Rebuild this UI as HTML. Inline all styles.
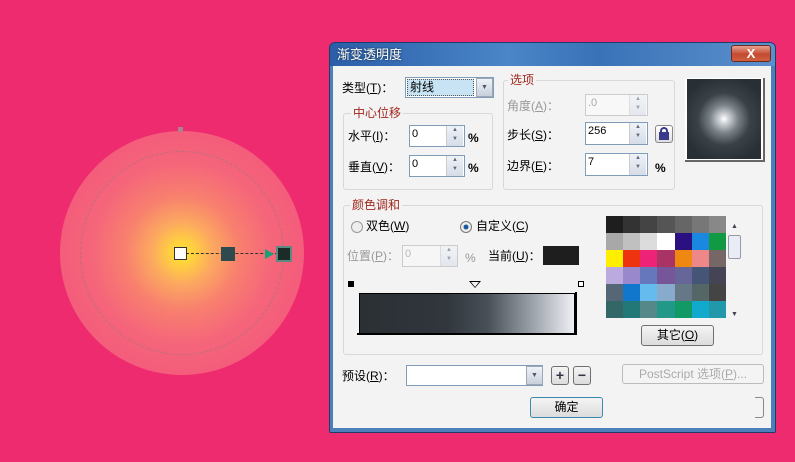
<!DOCTYPE html>
<html><head><meta charset="utf-8"><style>
*{margin:0;padding:0;box-sizing:border-box}
body{width:795px;height:462px;overflow:hidden;background:#ef2b6f;position:relative;font-family:"Liberation Sans","Noto Sans CJK SC",sans-serif;font-size:12px;color:#000}
.a{position:absolute}
.t{position:absolute;white-space:nowrap;font-size:12px;line-height:14px}
.g{color:#999}
.r{color:#a0281e}
.in{position:absolute;background:#fff;border:1px solid #7f9db9;font-size:11px;padding-left:2px;line-height:16px}
.sp{position:absolute;width:17px;border-left:1px solid #ccc;background:linear-gradient(#eef2f8,#d6dde8)}
.sp:after{content:"▲\A▼";white-space:pre;font-size:6px;line-height:9px;color:#667;display:block;text-align:center}
.dd{position:absolute;width:17px;border:1px solid #a0a8b8;background:linear-gradient(#eef2f8,#c8d0dc);font-size:7px;color:#556;text-align:center}
.fs{position:absolute;border:1px solid #d8d8d8;border-radius:3px}
.btn{position:absolute;border:1px solid #707070;border-radius:3px;background:linear-gradient(#f4f4f4,#dcdcdc);text-align:center;font-size:12px;line-height:16px}
</style></head><body>
<!-- circle -->
<div class="a" style="left:60px;top:131px;width:244px;height:244px;border-radius:50%;background:radial-gradient(circle at 50% 50%,#ffe428 0,#ffd040 7%,#fca860 18%,#f8806e 33%,#f5667a 52%,#f35a7b 75%,#f25479 100%)"></div>
<div class="a" style="left:80px;top:151px;width:204px;height:204px;border-radius:50%;border:1px dashed #b8707e"></div>
<div class="a" style="left:178px;top:127px;width:5px;height:5px;background:#b08090"></div>
<div class="a" style="left:186px;top:253px;width:92px;border-top:1px dashed #333"></div>
<div class="a" style="left:174px;top:247px;width:13px;height:13px;background:#fff;border:1px solid #333"></div>
<div class="a" style="left:221px;top:247px;width:14px;height:14px;background:#2f4a4e"></div>
<div class="a" style="left:265px;top:249px;width:0;height:0;border-left:9px solid #1aa078;border-top:5px solid transparent;border-bottom:5px solid transparent"></div>
<div class="a" style="left:276px;top:246px;width:16px;height:16px;background:#1c2a28;border:2px solid #5a8a80"></div>

<!-- dialog -->
<div class="a" style="left:329px;top:42px;width:447px;height:391px;background:#4d7fb8;border:1px solid #1c3d6a;border-radius:6px 6px 2px 2px"></div>
<div class="a" style="left:330px;top:43px;width:445px;height:23px;background:linear-gradient(90deg,#2b5ea8,#4a86c8 40%,#3a72b8 60%,#5a90cc);border-radius:5px 5px 0 0"></div>
<div class="t" style="left:337px;top:48px;color:#fff;font-size:13px;text-shadow:0 0 2px #123">渐变透明度</div>
<div class="a" style="left:731px;top:45px;width:40px;height:17px;background:linear-gradient(#e8a090,#c44a30 55%,#d06040);border:1px solid #6a2a20;border-radius:3px;color:#fff;text-align:center;font-weight:bold;font-size:13px;line-height:15px">X</div>
<div class="a" style="left:333px;top:66px;width:438px;height:362px;background:#f3f3f3"></div>

<div class="t" style="left:342px;top:81px">类型(<u>T</u>)：</div>
<div class="a" style="left:405px;top:77px;width:89px;height:21px;border:1px solid #7f9db9;background:#fff"></div>
<div class="a" style="left:407px;top:79px;width:67px;height:17px;background:#c8e4f4;border:1px dotted #555;font-size:12px;line-height:15px;padding-left:2px">射线</div>
<div class="dd" style="left:476px;top:78px;height:19px;line-height:17px">▼</div>

<div class="fs" style="left:343px;top:113px;width:150px;height:77px"></div>
<div class="t r" style="left:351px;top:106px;background:#f3f3f3;padding:0 2px">中心位移</div>
<div class="t" style="left:348px;top:129px">水平(<u>I</u>)：</div>
<div class="in" style="left:409px;top:125px;width:56px;height:22px">0</div>
<div class="sp" style="left:446px;top:126px;height:20px"></div>
<div class="t" style="left:468px;top:131px;font-weight:bold">%</div>
<div class="t" style="left:348px;top:160px">垂直(<u>V</u>)：</div>
<div class="in" style="left:409px;top:155px;width:56px;height:22px">0</div>
<div class="sp" style="left:446px;top:156px;height:20px"></div>
<div class="t" style="left:468px;top:161px;font-weight:bold">%</div>

<div class="fs" style="left:503px;top:80px;width:172px;height:110px"></div>
<div class="t r" style="left:508px;top:73px;background:#f3f3f3;padding:0 2px">选项</div>
<div class="t g" style="left:507px;top:99px">角度(<u>A</u>)：</div>
<div class="in" style="left:585px;top:94px;width:63px;height:22px;border-color:#ccc;color:#aaa;background:#f8f8f8">.0</div>
<div class="sp" style="left:629px;top:95px;height:20px;opacity:.6"></div>
<div class="t" style="left:507px;top:128px">步长(<u>S</u>)：</div>
<div class="in" style="left:585px;top:122px;width:63px;height:23px">256</div>
<div class="sp" style="left:629px;top:123px;height:21px"></div>
<div class="a" style="left:655px;top:125px;width:18px;height:18px;border:1px solid #888;border-radius:3px;background:linear-gradient(#fff,#ddd)"></div>
<div class="a" style="left:659px;top:132px;width:10px;height:8px;background:#3a3a8a"></div>
<div class="a" style="left:660px;top:127px;width:8px;height:7px;border:2px solid #3a3a8a;border-bottom:none;border-radius:4px 4px 0 0"></div>
<div class="t" style="left:507px;top:159px">边界(<u>E</u>)：</div>
<div class="in" style="left:585px;top:153px;width:63px;height:23px">7</div>
<div class="sp" style="left:629px;top:154px;height:21px"></div>
<div class="t" style="left:655px;top:161px;font-weight:bold">%</div>

<div class="a" style="left:685px;top:78px;width:80px;height:84px;border-right:2px solid #666;border-bottom:2px solid #666;background:#fff"></div>
<div class="a" style="left:687px;top:79px;width:74px;height:80px;background:radial-gradient(circle at 50% 50%,#fff 0,#c8ccd0 10%,#7a8288 26%,#3a4248 48%,#283036 80%)"></div>

<div class="fs" style="left:343px;top:205px;width:420px;height:150px"></div>
<div class="t r" style="left:350px;top:198px;background:#f3f3f3;padding:0 2px">颜色调和</div>
<div class="a" style="left:351px;top:221px;width:12px;height:12px;border-radius:50%;border:1px solid #999;background:#eee"></div>
<div class="t" style="left:366px;top:219px">双色(<u>W</u>)</div>
<div class="a" style="left:460px;top:221px;width:12px;height:12px;border-radius:50%;border:1px solid #777;background:radial-gradient(#1a5a9a 30%,#eee 40%)"></div>
<div class="t" style="left:476px;top:219px">自定义(<u>C</u>)</div>
<div class="t g" style="left:347px;top:249px">位置(<u>P</u>)：</div>
<div class="in" style="left:402px;top:245px;width:56px;height:22px;border-color:#ccc;color:#bbb;background:#f6f6f6">0</div>
<div class="sp" style="left:440px;top:246px;height:20px;opacity:.6"></div>
<div class="t g" style="left:465px;top:251px">%</div>
<div class="t" style="left:488px;top:249px">当前(<u>U</u>)：</div>
<div class="a" style="left:543px;top:246px;width:36px;height:19px;background:#1e1e1e"></div>
<div class="a" style="left:348px;top:281px;width:6px;height:6px;background:#000"></div>
<div class="a" style="left:469px;top:281px;width:0;height:0;border-left:6px solid transparent;border-right:6px solid transparent;border-top:7px solid #000"></div>
<div class="a" style="left:471px;top:282px;width:0;height:0;border-left:4px solid transparent;border-right:4px solid transparent;border-top:5px solid #f3f3f3"></div>
<div class="a" style="left:578px;top:281px;width:6px;height:6px;border:1px solid #000;background:#fff"></div>
<div class="a" style="left:357px;top:292px;width:220px;height:43px;border-right:2px solid #000;border-bottom:2px solid #000"></div>
<div class="a" style="left:359px;top:293px;width:216px;height:41px;border:1px solid #000;background:linear-gradient(90deg,#2a3034 0,#30363c 40%,#4a5058 60%,#9aa0a8 80%,#eef0f4 100%)"></div>

<div class="a" style="left:606px;top:216px;width:120px;height:102px;display:grid;grid-template-columns:repeat(7,1fr);grid-template-rows:repeat(6,1fr);background:#555">
<i style="background:#1e1e1e"></i><i style="background:#333"></i><i style="background:#444"></i><i style="background:#555"></i><i style="background:#666"></i><i style="background:#777"></i><i style="background:#888"></i>
<i style="background:#a8a8a8"></i><i style="background:#c0c0c0"></i><i style="background:#dcdcdc"></i><i style="background:#fff"></i><i style="background:#2a1080"></i><i style="background:#1a88e0"></i><i style="background:#119944"></i>
<i style="background:#ffee00"></i><i style="background:#ee3311"></i><i style="background:#ee2277"></i><i style="background:#aa3366"></i><i style="background:#ee8811"></i><i style="background:#ee8888"></i><i style="background:#776666"></i>
<i style="background:#bbaadd"></i><i style="background:#9988cc"></i><i style="background:#6677bb"></i><i style="background:#775599"></i><i style="background:#666699"></i><i style="background:#445577"></i><i style="background:#444455"></i>
<i style="background:#556677"></i><i style="background:#1177cc"></i><i style="background:#66bbee"></i><i style="background:#88aacc"></i><i style="background:#667788"></i><i style="background:#556666"></i><i style="background:#444444"></i>
<i style="background:#336666"></i><i style="background:#227777"></i><i style="background:#558888"></i><i style="background:#229988"></i><i style="background:#119966"></i><i style="background:#11aacc"></i><i style="background:#2299aa"></i>
</div>
<div class="a" style="left:727px;top:216px;width:15px;height:102px;background:#f3f3f3"></div>
<div class="t" style="left:731px;top:220px;font-size:7px;color:#445">▲</div>
<div class="a" style="left:728px;top:235px;width:13px;height:24px;border:1px solid #99a;border-radius:2px;background:#e8ecf4"></div>
<div class="t" style="left:731px;top:308px;font-size:7px;color:#445">▼</div>
<div class="btn" style="left:641px;top:325px;width:73px;height:21px;line-height:19px">其它(<u>O</u>)</div>

<div class="t" style="left:342px;top:369px">预设(<u>R</u>)：</div>
<div class="in" style="left:406px;top:365px;width:137px;height:21px"></div>
<div class="dd" style="left:526px;top:366px;height:19px;line-height:17px">▼</div>
<div class="btn" style="left:551px;top:366px;width:18px;height:19px;font-weight:bold;font-size:14px;color:#334">+</div>
<div class="btn" style="left:573px;top:366px;width:18px;height:19px;font-weight:bold;font-size:14px;color:#334">−</div>
<div class="btn" style="left:622px;top:364px;width:142px;height:20px;border-color:#bbb;color:#aaa;background:#f4f4f4;line-height:18px">PostScript 选项(<u>P</u>)...</div>
<div class="btn" style="left:530px;top:397px;width:73px;height:21px;border-color:#3a8ab0;line-height:19px">确定</div>
<div class="a" style="left:755px;top:397px;width:9px;height:21px;border:1px solid #888;border-left:none;border-radius:0 3px 3px 0"></div>
</body></html>
